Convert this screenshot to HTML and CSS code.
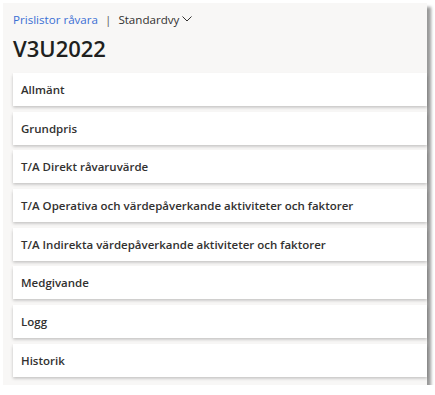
FILE: index.html
```html
<!DOCTYPE html>
<html lang="sv">
<head>
  <meta charset="UTF-8">
  <meta name="viewport" content="width=device-width, initial-scale=1.0">
  <title>V3U2022</title>
  <link rel="stylesheet" href="styles.css">
</head>
<body>
  <div class="frame">
    <header class="page-header">
      <div class="crumbs">
        <a href="#" class="crumb-link">Prislistor råvara</a>
        <span class="sep">|</span>
        <span class="view">Standardvy
          <svg class="chevron" width="10" height="6" viewBox="0 0 10 6"><path d="M0.5 0.5 L5 5 L9.5 0.5" fill="none" stroke="#323130" stroke-width="1"/></svg>
        </span>
      </div>
      <h1>V3U2022</h1>
    </header>

    <div class="sections">
      <div class="section">Allmänt</div>
      <div class="section">Grundpris</div>
      <div class="section">T/A Direkt råvaruvärde</div>
      <div class="section">T/A Operativa och värdepåverkande aktiviteter och faktorer</div>
      <div class="section">T/A Indirekta värdepåverkande aktiviteter och faktorer</div>
      <div class="section">Medgivande</div>
      <div class="section">Logg</div>
      <div class="section">Historik</div>
    </div>
  </div>
</body>
</html>
```

FILE: styles.css
```css
body {
  margin: 0;
  padding: 0;
  background-color: #ffffff;
  font-family: "Open Sans", "Noto Sans", Arial, sans-serif;
  color: #323130;
}

.frame {
  margin: 3px 0 0 3px;
  width: 424px;
  height: 382px;
  background-color: #f8f7f6;
  box-shadow: 4px 4px 3px rgba(0, 0, 0, 0.4);
}

.page-header {
  padding: 8px 10px 0 10px;
}

.crumbs {
  display: flex;
  align-items: center;
  font-size: 11.6px;
  height: 16px;
}
.crumb-link {
  color: #3b6fd4;
  text-decoration: none;
}
.sep {
  margin: 0 7px;
  color: #605e5c;
}
.view {
  display: flex;
  align-items: center;
}
.chevron {
  margin-left: 3px;
}

h1 {
  margin: 6px 0 0 0;
  font-size: 22px;
  font-weight: 600;
  line-height: 30px;
  color: #201f1e;
}

.sections {
  margin-top: 10px;
  padding-left: 10px;
  display: flex;
  flex-direction: column;
  gap: 5.7px;
}
.section {
  background-color: #ffffff;
  height: 33px;
  line-height: 33px;
  padding-left: 8px;
  font-size: 11.5px;
  font-weight: 600;
  color: #323130;
  box-shadow: 0 1.6px 3px rgba(0, 0, 0, 0.22), 0 0.3px 0.9px rgba(0, 0, 0, 0.12);
}
```
